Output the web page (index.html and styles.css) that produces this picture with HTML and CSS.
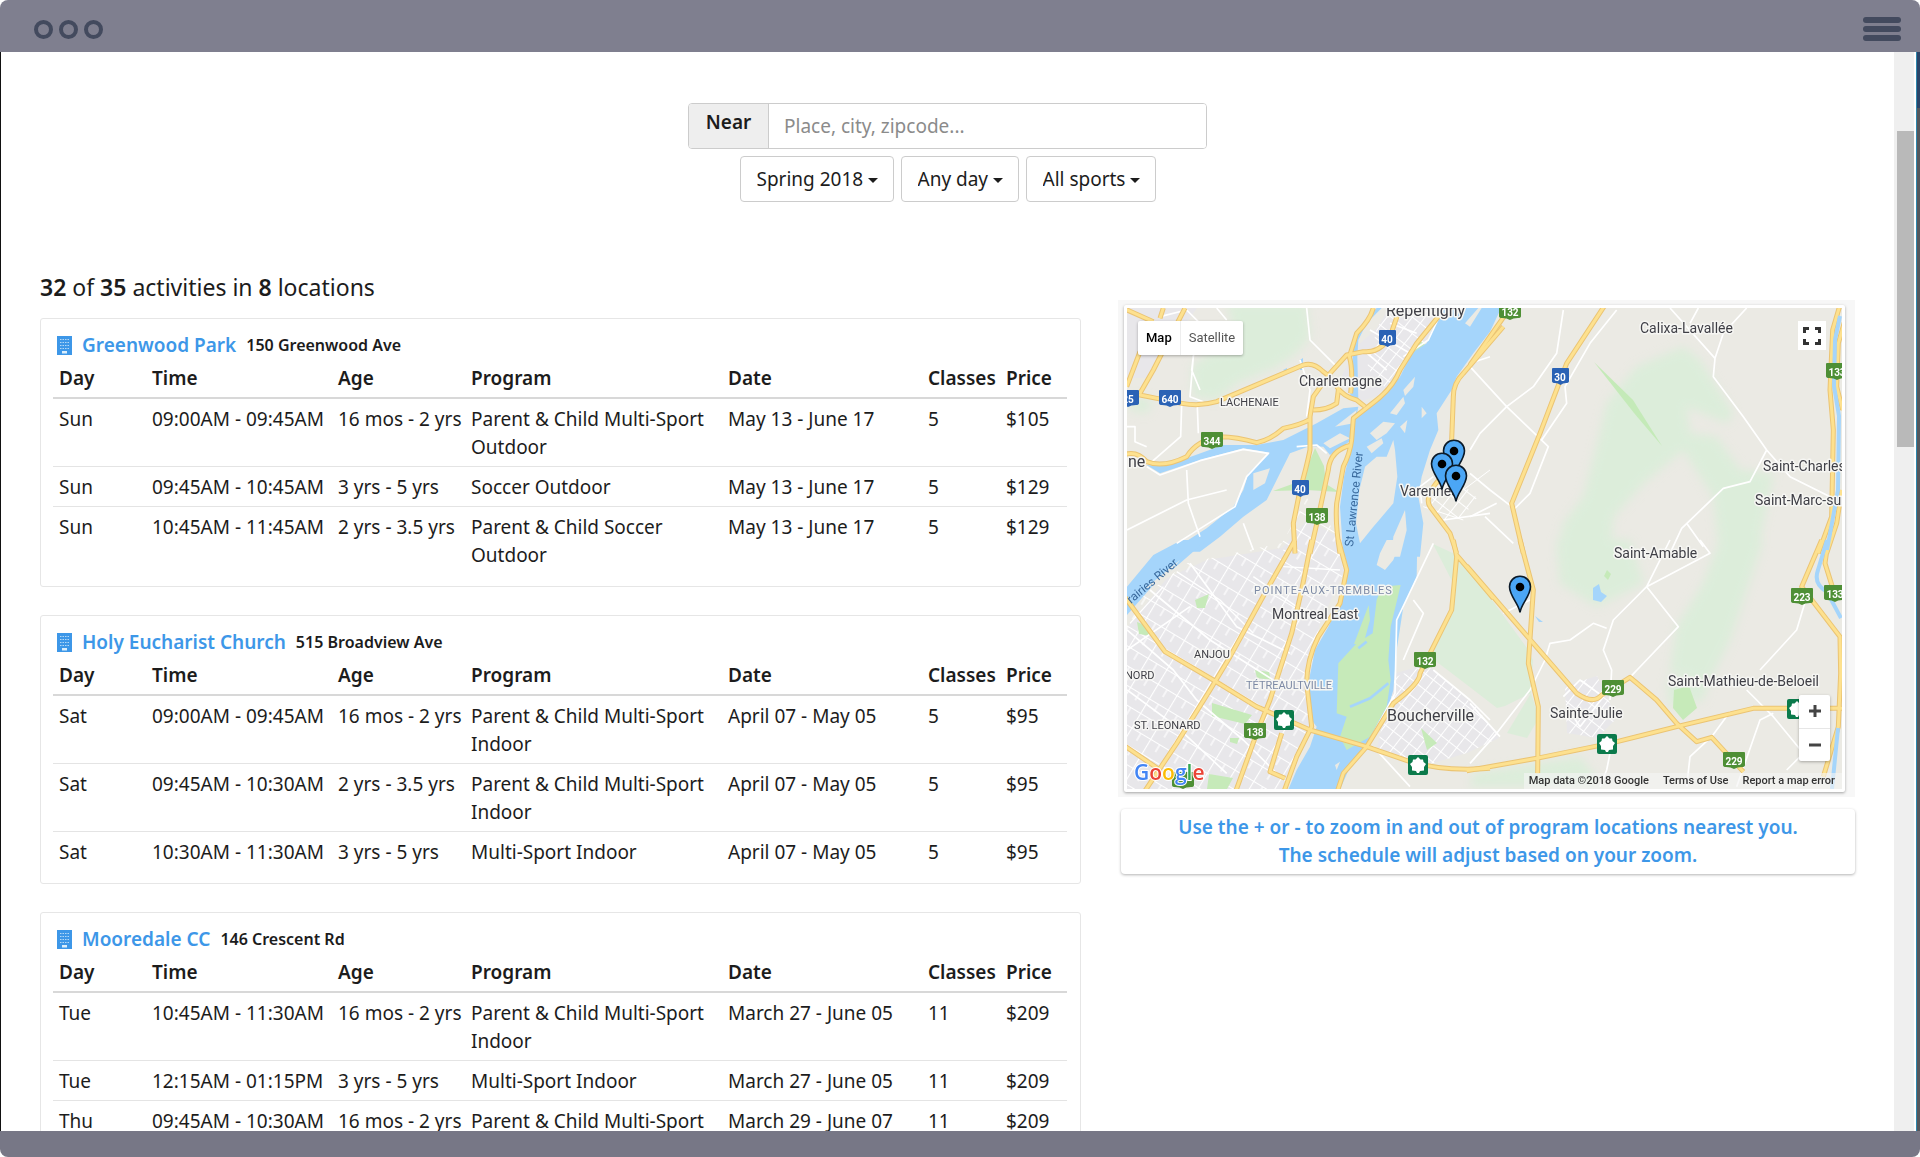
FILE: index.html
```html
<!DOCTYPE html>
<html lang="en">
<head>
<meta charset="utf-8">
<title>Activities by location</title>
<link rel="stylesheet" href="styles.css">
</head>
<body>
<div class="window">
  <header class="titlebar">
    <div class="dots"><span class="dot"></span><span class="dot"></span><span class="dot"></span></div>
    <button class="menu" type="button" aria-label="Menu"><span class="menu-bar"></span><span class="menu-bar"></span><span class="menu-bar"></span></button>
  </header>

  <div class="viewport">
    <div class="page">
      <form class="search">
        <div class="near">
          <label class="near-label" for="place">Near</label>
          <input class="near-input" id="place" type="text" placeholder="Place, city, zipcode...">
        </div>
        <div class="filters">
          <div class="filter"><select class="filter-select" aria-label="Season"><option>Spring 2018</option></select></div>
          <div class="filter"><select class="filter-select" aria-label="Day"><option>Any day</option></select></div>
          <div class="filter"><select class="filter-select" aria-label="Sport"><option>All sports</option></select></div>
        </div>
      </form>

      <main class="columns">
        <section class="results">
          <h1 class="summary"><strong>32</strong> of <strong>35</strong> activities in <strong>8</strong> locations</h1>

          <article class="card">
            <h2 class="place"><svg class="building" viewBox="0 0 15 19" aria-hidden="true"><use href="#building"/></svg><a class="place-name" href="#greenwood">Greenwood Park</a><small class="address">150 Greenwood Ave</small></h2>
            <table class="schedule">
              <colgroup><col class="c-day"><col class="c-time"><col class="c-age"><col class="c-program"><col class="c-date"><col class="c-classes"><col class="c-price"></colgroup>
              <thead><tr><th>Day</th><th>Time</th><th>Age</th><th>Program</th><th>Date</th><th>Classes</th><th>Price</th></tr></thead>
              <tbody>
                <tr><td>Sun</td><td>09:00AM - 09:45AM</td><td>16 mos - 2 yrs</td><td class="wrap">Parent &amp; Child Multi-Sport Outdoor</td><td>May 13 - June 17</td><td>5</td><td>$105</td></tr>
                <tr><td>Sun</td><td>09:45AM - 10:45AM</td><td>3 yrs - 5 yrs</td><td class="wrap">Soccer Outdoor</td><td>May 13 - June 17</td><td>5</td><td>$129</td></tr>
                <tr><td>Sun</td><td>10:45AM - 11:45AM</td><td>2 yrs - 3.5 yrs</td><td class="wrap">Parent &amp; Child Soccer Outdoor</td><td>May 13 - June 17</td><td>5</td><td>$129</td></tr>
              </tbody>
            </table>
          </article>

          <article class="card">
            <h2 class="place"><svg class="building" viewBox="0 0 15 19" aria-hidden="true"><use href="#building"/></svg><a class="place-name" href="#holy-eucharist">Holy Eucharist Church</a><small class="address">515 Broadview Ave</small></h2>
            <table class="schedule">
              <colgroup><col class="c-day"><col class="c-time"><col class="c-age"><col class="c-program"><col class="c-date"><col class="c-classes"><col class="c-price"></colgroup>
              <thead><tr><th>Day</th><th>Time</th><th>Age</th><th>Program</th><th>Date</th><th>Classes</th><th>Price</th></tr></thead>
              <tbody>
                <tr><td>Sat</td><td>09:00AM - 09:45AM</td><td>16 mos - 2 yrs</td><td class="wrap">Parent &amp; Child Multi-Sport Indoor</td><td>April 07 - May 05</td><td>5</td><td>$95</td></tr>
                <tr><td>Sat</td><td>09:45AM - 10:30AM</td><td>2 yrs - 3.5 yrs</td><td class="wrap">Parent &amp; Child Multi-Sport Indoor</td><td>April 07 - May 05</td><td>5</td><td>$95</td></tr>
                <tr><td>Sat</td><td>10:30AM - 11:30AM</td><td>3 yrs - 5 yrs</td><td class="wrap">Multi-Sport Indoor</td><td>April 07 - May 05</td><td>5</td><td>$95</td></tr>
              </tbody>
            </table>
          </article>

          <article class="card">
            <h2 class="place"><svg class="building" viewBox="0 0 15 19" aria-hidden="true"><use href="#building"/></svg><a class="place-name" href="#mooredale">Mooredale CC</a><small class="address">146 Crescent Rd</small></h2>
            <table class="schedule">
              <colgroup><col class="c-day"><col class="c-time"><col class="c-age"><col class="c-program"><col class="c-date"><col class="c-classes"><col class="c-price"></colgroup>
              <thead><tr><th>Day</th><th>Time</th><th>Age</th><th>Program</th><th>Date</th><th>Classes</th><th>Price</th></tr></thead>
              <tbody>
                <tr><td>Tue</td><td>10:45AM - 11:30AM</td><td>16 mos - 2 yrs</td><td class="wrap">Parent &amp; Child Multi-Sport Indoor</td><td>March 27 - June 05</td><td>11</td><td>$209</td></tr>
                <tr><td>Tue</td><td>12:15AM - 01:15PM</td><td>3 yrs - 5 yrs</td><td class="wrap">Multi-Sport Indoor</td><td>March 27 - June 05</td><td>11</td><td>$209</td></tr>
                <tr><td>Thu</td><td>09:45AM - 10:30AM</td><td>16 mos - 2 yrs</td><td class="wrap">Parent &amp; Child Multi-Sport Indoor</td><td>March 29 - June 07</td><td>11</td><td>$209</td></tr>
              </tbody>
            </table>
          </article>
        </section>

        <aside class="side">
          <div class="map-well">
            <div class="map-frame">
              <div class="map">
                <svg class="map-art" viewBox="0 0 715 481" preserveAspectRatio="xMidYMid slice" role="img" aria-label="Map of program locations">
                  <defs>
                    <symbol id="building" viewBox="0 0 15 19">
                      <path fill="#3d97e8" d="M0 0h15v19H0z"/>
                      <path fill="none" stroke="#b5d9f7" stroke-width="1" d="M3 3.500h9M3 6.500h9M3 9.500h9M3 12.500h9" stroke-dasharray="1.500 1"/>
                      <path fill="#dceefb" d="M5 15h5v2.500H5z"/>
                    </symbol>
                    <pattern id="streets" width="22" height="17" patternUnits="userSpaceOnUse" patternTransform="rotate(31)">
                      <path d="M0 .5H22M.5 0V17M11 0V9" stroke="#fff" stroke-width="1.200" fill="none"/>
                    </pattern>
                    <pattern id="lanes" width="10" height="13" patternUnits="userSpaceOnUse" patternTransform="rotate(38)">
                      <path d="M0 .5H10M.5 0V13" stroke="#fff" stroke-width="1" fill="none"/>
                    </pattern>
                    <filter id="soft" x="-20%" y="-20%" width="140%" height="140%"><feGaussianBlur stdDeviation="5"/></filter>
                    <symbol id="pin" viewBox="0 0 24 39" overflow="visible">
                      <path d="M12 37.500C11 29 1.500 21 1.500 11.800 1.500 6 6 1.300 12 1.300S22.500 6 22.500 11.800C22.500 21 13 29 12 37.500Z" fill="#4ba6f5" stroke="#0b1a28" stroke-width="1.600"/>
                      <circle cx="12" cy="12" r="4.300" fill="#000"/>
                    </symbol>
                    <symbol id="shield" viewBox="0 0 22 17" overflow="visible">
                      <path d="M1 0H21Q22 0 22 1V13Q22 15 19 15 14 15 11 17 8 15 3 15 0 15 0 13V1Q0 0 1 0Z"/>
                    </symbol>
                    <symbol id="shield-narrow" viewBox="0 0 17 17" overflow="visible">
                      <path d="M1 0H16Q17 0 17 1V13Q17 15 14 15 11 15 8.500 17 6 15 3 15 0 15 0 13V1Q0 0 1 0Z"/>
                    </symbol>
                    <symbol id="leaf" viewBox="0 0 20 20">
                      <rect width="20" height="20" rx="2" fill="#0b7a4b"/>
                      <path fill="#fff" d="M10 2 12.500 4.500 15 4.500 15.500 7 18 9 16 12 16 15.500 12 16 11 18H9L8 16 4 15.500 4 12 2 9 4.500 7 5 4.500 7.500 4.500Z"/>
                    </symbol>
                  </defs>

                  <rect width="715" height="481" fill="#ebeae4"/>

                  <!-- woodland -->
                  <g fill="#dcedda" filter="url(#soft)">
                    <g transform="translate(-17 -18) scale(.33333)">
                      <path d="M350 40H590L600 140 560 190 500 230 380 280 320 330 250 320 245 230 300 190 390 180Z"/>
                      <path d="M60 320 130 330 110 370 60 360Z"/>
                    </g>
                    <g transform="translate(343 -18) scale(.33333)">
                      <path d="M640 170 690 210 740 290 790 370 770 400 700 370 650 350 660 430 740 440 810 540 910 550 860 800H750L730 620 640 480 520 580 430 680 420 800H260L280 700 340 620 380 470 410 340 500 230 570 200Z"/>
                    </g>
                    <g transform="translate(343 232) scale(.33333)">
                      <path d="M260 0H480L520 130 380 200 270 130Z"/>
                      <path d="M750 0H880L780 300 720 420 600 400 620 260 700 130Z"/>
                      <path d="M590 420 720 410 700 480 600 500ZM0 740 10 700 330 650 400 740Z"/>
                    </g>
                  </g>
                  <g fill="#dcedda">
                    <path d="M306 236 326 275 327 302 302 348 331 370 370 400 378 398 404 385 406 352 400 340 343 262 330 247Z"/>
                    <path d="M404 385 412 410 400 430 380 425Z"/>
                  </g>
                  <path d="M467 54 506 92 535 138 507 105Z" fill="#c4eab8"/>

                  <!-- built-up areas -->
                  <g fill="#e8e7ea">
                    <path d="M0 320 40 270 80 252 155 240 180 212 214 230 218 262 193 315 182 370 184 415 160 481H0Z"/>
                    <path d="M0 0H70L20 70H0ZM250 20 262 0H312L298 36 262 84 226 96 214 70 228 40Z"/>
                    <path d="M266 366 300 356 350 400 372 430 340 445 290 460 250 440Z"/>
                    <path d="M438 378 470 368 490 410 470 430 440 425Z"/>
                  </g>
                  <path fill="url(#streets)" d="M0 300 60 255 155 235 180 190 214 230 218 262 193 315 182 370 184 415 160 481H0Z"/>
                  <g fill="url(#lanes)">
                    <path d="M266 370 300 356 350 400 372 430 340 445 290 460 250 440Z"/>
                    <path d="M438 378 470 368 490 410 470 430 440 425ZM250 20 262 0H312L298 36 262 84 240 60Z"/>
                    <path d="M300 180 330 170 350 190 335 210 310 212Z"/>
                  </g>

                  <!-- parks -->
                  <g fill="#c6eab9">
                    <path d="M188 140 197 158 199 176 212 184 180 182 176 170ZM146 183 182 170 182 182Z"/>
                    <path d="M85 395 125 407 118 416 85 408ZM82 466 106 470 100 481H80ZM68 292 82 286 78 300 70 300ZM128 362 142 364 144 372 130 370ZM10 314 20 318 24 328 12 326ZM103 430 112 430 110 436 103 434Z"/>
                    <path d="M290 32 298 36 288 50 284 48ZM294 420 310 435 300 442ZM547 382 562 378 570 400 556 412 546 400ZM480 262 484 266 481 272 477 268Z"/>
                  </g>

                  <!-- water -->
                  <g fill="#a5d5fb">
                    <g transform="translate(-17 -18) scale(.33333)">
                      <path d="M1000 40H1180L1140 125 1090 190 1040 260 1025 300 980 370 985 420 960 480 935 560 925 620 940 700 930 800H700L690 650 702 560 722 480 735 380 770 350 830 310 870 260 905 190 950 160Z"/>
                      <path d="M745 350 700 355 620 400 520 450 440 465 340 465 230 505 160 528 110 525 150 550 270 510 400 475 480 488 415 550 400 600 370 650 290 715 180 785H270L330 740 400 680 470 630 500 570 540 490 600 468 640 470 660 495 725 450Z"/>
                      <path d="M815 54 770 100 745 150 742 200 745 330H720L728 200 735 140 760 100 800 54Z"/>
                    </g>
                    <g transform="translate(-17 232) scale(.33333)">
                      <path d="M215 0 130 45 51 140V225L130 135 210 70 290 0Z"/>
                      <path d="M695 0 712 80 692 180 655 260 615 330 595 430 605 540 620 560 600 620 560 690 530 760H685L720 680 770 610 830 520 850 450 860 330 880 200 920 110 922 0Z"/>
                    </g>
                    <path d="M466 280 472 276 474 284 480 288 474 294 466 292ZM408 308 416 314 412 314ZM156 62 160 60 160 64ZM173 52 176 50V62H173Z"/>
                  </g>
                  <!-- islands -->
                  <g fill="#ebeae4">
                    <g transform="translate(-17 -18) scale(.33333)">
                      <path d="M850 450 830 500 800 500 765 530 748 600 738 700 750 760 790 710 850 640 862 560 855 480Z"/>
                      <path d="M780 430 820 395 855 400 830 430 800 450ZM640 460 690 430 720 445 660 475ZM675 410 740 360 730 400ZM430 600 430 550 480 535 465 580ZM840 370 880 320 885 340 860 375ZM880 300 915 260 910 290 885 318ZM1065 100 1105 54H1115L1080 110ZM770 470 815 445 820 460 785 490ZM935 350 950 370 935 385ZM870 410 892 390 885 430Z"/>
                      <path d="M850 740 885 660 890 720 870 800H845Z"/>
                    </g>
                    <g transform="translate(-17 232) scale(.33333)">
                      <path d="M872 0 850 60 825 90 800 75 810 40 830 0ZM675 675 690 665 680 690Z"/>
                      <path d="M100 150 210 60 160 120Z"/>
                    </g>
                  </g>
                  <g transform="translate(-17 232) scale(.33333)">
                    <path fill="#c6eab9" d="M800 180 815 140 872 135 842 260 835 360 842 420 830 500 780 590 710 630 690 590 710 530 680 520 685 370 740 310 788 280ZM776 195 780 240 760 312 732 312Z"/>
                    <path fill="none" stroke="#a5d5fb" stroke-width="8" d="M835 430 780 475 720 500M770 305 745 325"/>
                  </g>

                  <!-- local roads -->
                  <g fill="none" stroke="#fff" stroke-width="5" stroke-linejoin="round">
                    <g transform="translate(-17 -18) scale(.33333)">
                      <path d="M51 410H75V455L110 470M215 345 212 440 120 520M262 350 265 430M250 200 240 320 280 335M320 54 350 90M150 80 230 60 270 100 250 200 245 240 270 300M590 54 600 150 680 230M590 380 600 300 570 210M51 720 230 630 350 600M230 540 235 640 270 740M400 700 430 780M760 180 830 240M780 120 900 190M840 100 920 130M110 530 150 555 270 512 400 478 475 490 410 560 375 650 200 760M560 470 620 465 650 490M1000 54 955 150 880 200M1140 200 1080 220M970 560 930 590 935 640M1000 690 1140 670"/>
                      <path stroke-width="3" d="M1140 540 1060 600M940 650 1060 690"/>
                    </g>
                    <g transform="translate(343 -18) scale(.33333)">
                      <path d="M0 230 110 350 235 470 180 610 130 660M280 60 260 190 190 290 110 350 30 430 0 480M440 60 360 160 285 290 290 340 215 450M600 54 735 205 730 260 820 380 890 480 960 560 1100 630M830 54 760 130 735 205M890 480 840 575 760 595 635 715 600 790M0 550 60 600 125 650M45 680 130 760M0 680 80 640M685 54 660 100M650 700 700 770"/>
                    </g>
                    <g transform="translate(343 232) scale(.33333)">
                      <path d="M600 0 530 140 430 240 400 330 425 390 420 480M690 0 720 40 530 140M530 140 625 260 480 412M410 265 370 250 300 300 240 310 225 360 180 450 80 580 0 670M1010 170 980 270 870 390M830 450 910 530 1000 640 950 690M910 520 870 540 800 740M780 515 725 590 660 650 650 740M100 220 180 180M0 490 90 590M420 640 410 690 390 740M280 470 330 420 400 470 330 560 290 500"/>
                    </g>
                    <g transform="translate(-17 232) scale(.33333)">
                      <path d="M970 10 860 240 855 460 790 580M910 180 940 220 880 360M970 390 1080 480 1140 540M51 270 190 390 260 480 400 600 500 700M51 450 200 560 350 700M240 70 380 260 540 340M51 330 240 200M120 150 300 300 490 420M790 620 900 740"/>
                      <path stroke-width="4" d="M200 95 330 180 430 280M160 140 60 250M540 40 520 30M520 80 690 90M430 110 560 200 690 240"/>
                    </g>
                  </g>

                  <!-- highways: a darker casing under a lighter fill -->
                  <defs>
                    <g id="highways" fill="none" stroke-linejoin="round">
                      <g transform="translate(-17 -18) scale(.33333)">
                        <path d="M40 310 90 315 140 325 215 340Q270 350 320 335L580 225Q610 215 640 245L660 260M40 495Q80 480 110 515 160 535 230 500 260 450 330 440 380 440 440 458 480 450 520 415 570 405 600 388M870 54 840 140Q810 190 760 185L710 195 660 250 610 320 600 380V480Q590 530 570 600L550 700 555 790M790 54Q780 90 740 130L718 200Q730 240 722 310M680 290Q700 320 740 330L765 350M985 80 920 160 870 240Q850 290 800 330L730 385 725 450Q720 490 700 530L680 640Q675 700 690 790M725 465Q660 480 655 540L625 680 600 790M685 300 680 340Q650 360 610 360M40 55 130 95M160 54 150 85M90 185 50 290M225 54 130 240 90 310M1180 110 1060 250Q1030 280 1030 320L1025 450M995 560Q940 620 960 650L1020 730 1040 790"/>
                      </g>
                      <g transform="translate(-17 232) scale(.33333)">
                        <path d="M555 0 470 150 360 350 300 450 200 610 100 760M685 0 710 90 690 190 625 290Q590 360 590 430L605 560 560 650 520 760M605 0 575 150 545 280 480 480 440 580 375 760M1030 0 1040 50 1025 210 960 340 930 400Q930 430 850 490L770 620 700 700 680 760M1040 45 1150 175M40 165 165 335 310 420 440 500 600 570 770 620 900 665Q1000 695 1140 685M40 615 150 690M515 580 480 695 525 715"/>
                      </g>
                      <g transform="translate(343 -18) scale(.33333)">
                        <path d="M405 45 290 220 210 430 125 640 160 790M120 54 0 225M1110 45 1088 120 1080 300 1090 420 1085 680 1045 790M1125 90 1105 160 1100 290 1118 360M1115 600 1100 700 1070 790"/>
                      </g>
                      <g transform="translate(343 232) scale(.33333)">
                        <path d="M150 0 190 150 175 370 205 500 203 700M-10 78 190 310 320 460Q370 495 395 465L480 412 560 480 620 550 680 605 725 592 820 695M-10 692 200 655 420 610 620 560 850 505H1120M1055 0 995 140 1110 290 1112 400 1105 560 1060 710M1075 0 1065 70 1090 150"/>
                      </g>
                    </g>
                  </defs>
                  <use href="#highways" stroke="#ebc473" stroke-width="15"/>
                  <use href="#highways" stroke="#fde18f" stroke-width="9"/>
                  <g fill="none" stroke="#a5d5fb" stroke-width="4">
                    <path d="M713 8 708 32 707 78 712 108 711 182 700 242M700 232 691 262Q686 276 700 284L714 310M705 481 711 420"/>
                  </g>

                  <!-- town names -->
                  <g class="names">
                    <text x="259" y="8" class="t-large">Repentigny</text>
                    <text x="172" y="78" class="t-mid">Charlemagne</text>
                    <text x="93" y="98" class="t-caps">LACHENAIE</text>
                    <text x="1" y="159" class="t-large">ne</text>
                    <text x="273" y="188" class="t-mid">Varennes</text>
                    <text x="513" y="25" class="t-mid">Calixa-Lavallée</text>
                    <text x="636" y="163" class="t-mid">Saint-Charles</text>
                    <text x="628" y="197" class="t-mid">Saint-Marc-sur</text>
                    <text x="487" y="250" class="t-mid">Saint-Amable</text>
                    <text x="541" y="378" class="t-mid">Saint-Mathieu-de-Beloeil</text>
                    <text x="423" y="410" class="t-mid">Sainte-Julie</text>
                    <text x="145" y="311" class="t-mid">Montreal East</text>
                    <text x="260" y="413" class="t-large">Boucherville</text>
                    <text x="67" y="350" class="t-caps">ANJOU</text>
                    <text x="-2" y="371" class="t-caps">NORD</text>
                    <text x="7" y="421" class="t-caps">ST. LEONARD</text>
                    <text x="127" y="286" class="t-district t-spaced">POINTE-AUX-TREMBLES</text>
                    <text x="119" y="381" class="t-district">TÉTREAULTVILLE</text>
                    <text class="t-river" transform="translate(226 239) rotate(-84)">St Lawrence River</text>
                    <text class="t-river" transform="translate(4 296) rotate(-40)">rairies River</text>
                  </g>

                  <!-- route shields -->
                  <g class="blue">
                    <use href="#shield" x="-10" y="82" width="22" height="17"/><use href="#shield" x="32" y="82" width="22" height="17"/>
                    <use href="#shield-narrow" x="252" y="22" width="17" height="17"/><use href="#shield-narrow" x="165" y="172" width="17" height="17"/>
                    <use href="#shield-narrow" x="425" y="60" width="17" height="17"/>
                  </g>
                  <g class="green">
                    <use href="#shield" x="74" y="124" width="22" height="17"/><use href="#shield" x="179" y="200" width="22" height="17"/>
                    <use href="#shield" x="372" y="-5" width="22" height="17"/><use href="#shield" x="699" y="55" width="22" height="17"/>
                    <use href="#shield" x="117" y="415" width="22" height="17"/><use href="#shield" x="287" y="344" width="22" height="17"/>
                    <use href="#shield" x="664" y="280" width="22" height="17"/><use href="#shield" x="697" y="277" width="22" height="17"/>
                    <use href="#shield" x="475" y="372" width="22" height="17"/><use href="#shield" x="596" y="444" width="22" height="17"/>
                    <use href="#shield" x="45" y="464" width="22" height="17"/>
                  </g>
                  <g class="routes">
                    <text x="1" y="95">25</text><text x="43" y="95">640</text><text x="260" y="35">40</text><text x="173" y="185">40</text><text x="433" y="73">30</text>
                    <text x="85" y="137">344</text><text x="190" y="213">138</text><text x="383" y="8">132</text><text x="710" y="68">133</text>
                    <text x="128" y="428">138</text><text x="298" y="357">132</text><text x="675" y="293">223</text><text x="708" y="290">133</text>
                    <text x="486" y="385">229</text><text x="607" y="457">229</text>
                  </g>
                  <use href="#leaf" x="147" y="402" width="20" height="20"/>
                  <use href="#leaf" x="281" y="447" width="20" height="20"/>
                  <use href="#leaf" x="470" y="426" width="20" height="20"/>
                  <use href="#leaf" x="660" y="391" width="20" height="20"/>

                  <!-- program locations -->
                  <use href="#pin" x="315" y="131" width="24" height="39"/>
                  <use href="#pin" x="303" y="144" width="24" height="39"/>
                  <use href="#pin" x="317" y="156" width="24" height="39"/>
                  <use href="#pin" x="381" y="267" width="24" height="39"/>

                  <text class="google" x="7" y="472"><tspan fill="#4285f4">G</tspan><tspan fill="#ea4335">o</tspan><tspan fill="#fbbc05">o</tspan><tspan fill="#4285f4">g</tspan><tspan fill="#34a853">l</tspan><tspan fill="#ea4335">e</tspan></text>
                </svg>
                <div class="map-types"><button class="map-type is-on" type="button">Map</button><button class="map-type" type="button">Satellite</button></div>
                <button class="fullscreen" type="button" aria-label="Full screen"><svg viewBox="0 0 18 18" width="18" height="18"><path fill="none" stroke="#333" stroke-width="3" d="M1.500 6V1.500H6M12 1.500H16.500V6M16.500 12V16.500H12M6 16.500H1.500V12"/></svg></button>
                <div class="zoom">
                  <button class="zoom-btn" type="button" aria-label="Zoom in"><svg viewBox="0 0 12 12" width="12" height="12"><path stroke="#444" stroke-width="3" d="M0 6H12M6 0V12"/></svg></button>
                  <button class="zoom-btn" type="button" aria-label="Zoom out"><svg viewBox="0 0 12 12" width="12" height="12"><path stroke="#444" stroke-width="3" d="M0 6H12"/></svg></button>
                </div>
                <div class="credits"><span>Map data ©2018 Google</span><a href="#terms">Terms of Use</a><a href="#report">Report a map error</a></div>
              </div>
            </div>
          </div>
          <p class="hint">Use the + or - to zoom in and out of program locations nearest you.<br>The schedule will adjust based on your zoom.</p>
        </aside>
      </main>
    </div>
    <div class="scroll-track"><div class="scroll-thumb"></div></div>
    <div class="edge"></div>
  </div>
  <footer class="bottombar"></footer>
</div>
</body>
</html>
```
FILE: styles.css
```css
* { box-sizing: border-box; }

body {
  margin: 0;
  font: 19px/28px "Noto Sans", "Open Sans", sans-serif;
  color: #1c1c1c;
  background: #fff;
}

button, input, select { font: inherit; color: inherit; }
a { color: inherit; text-decoration: none; }

.window { display: flex; flex-direction: column; height: 100vh; overflow: hidden; }

/* window chrome */
.titlebar {
  flex: none;
  display: flex;
  align-items: center;
  justify-content: space-between;
  height: 52px;
  padding: 6px 19px 0 34px;
  background: #7f7f8f;
  border-radius: 8px 8px 0 0;
}
.dots { display: flex; gap: 6px; }
.dot { width: 19px; height: 19px; border: 4px solid #434a5e; border-radius: 50%; }
.menu { display: flex; flex-direction: column; gap: 3px; padding: 0; border: 0; background: none; }
.menu-bar { width: 38px; height: 6px; border-radius: 3px; background: #434a5e; }
.bottombar { flex: none; height: 26px; background: #777786; border-radius: 0 0 8px 8px; }

.viewport { flex: 1; min-height: 0; display: flex; border-left: 1px solid #111; overflow: hidden; }
.page { flex: 1; min-width: 0; padding: 51px 39px 0; }
.scroll-track { width: 20px; padding: 79px 0 0 3px; background: #efefef; }
.scroll-thumb { height: 316px; background: #b9b9b9; }
.edge { width: 6px; background: linear-gradient(to right, #fff 2px, #2d87ad 2px 3px, transparent 3px), linear-gradient(#2b4468 56px, #55575c 56px); }

/* search */
.search { display: flex; flex-direction: column; align-items: center; gap: 7px; }
.near { display: flex; width: 519px; height: 46px; border: 1px solid #ccc; border-radius: 4px; overflow: hidden; }
.near-label { width: 80px; padding-top: 4px; border-right: 1px solid #ccc; background: #eee; text-align: center; font-weight: 600; }
.near-input { flex: 1; min-width: 0; padding: 0 15px; border: 0; background: #fff; }
.near-input::placeholder { color: #8b8b8b; opacity: 1; }
.filters { display: flex; gap: 7px; }
.filter { position: relative; }
.filter::after {
  content: "";
  position: absolute;
  right: 16px;
  top: 22px;
  border: 5px solid transparent;
  border-top-color: #1c1c1c;
  border-bottom: 0;
  pointer-events: none;
}
.filter-select { appearance: none; height: 46px; padding: 0 29px 0 16px; border: 1px solid #ccc; border-radius: 4px; background: #fff; }

/* results */
.columns { display: grid; grid-template-columns: 1041fr 737fr; gap: 37px; margin-top: 71px; align-items: start; }
.summary { margin: 0 0 17px; font-size: 23px; line-height: 28px; font-weight: 400; }
.summary strong { font-weight: 600; }
.card { margin-bottom: 28px; padding: 12px 13px 11px 12px; border: 1px solid #e6e6e6; border-radius: 3px; }
.place { display: flex; align-items: center; margin: 0; padding-left: 4px; font-size: 19px; line-height: 28px; }
.building { width: 15px; height: 19px; margin-right: 10px; }
.place-name { color: #3d97e8; font-weight: 600; }
.address { margin-left: 10px; font-size: 16px; font-weight: 600; }
.schedule { width: 100%; table-layout: fixed; border-collapse: separate; border-spacing: 0; text-align: left; }
.schedule th { padding: 5px 6px; border-bottom: 2px solid #d8d8d8; font-weight: 600; }
.schedule td { padding: 6px 6px 5px; border-bottom: 1px solid #e4e4e4; vertical-align: top; white-space: nowrap; }
.schedule tr:last-child td { border-bottom-color: transparent; }
.schedule .wrap { white-space: normal; }
.c-day { width: 93px; }
.c-time { width: 186px; }
.c-age { width: 133px; }
.c-program { width: 257px; }
.c-date { width: 200px; }
.c-classes { width: 78px; }
.c-price { width: 67px; }

/* map */
.side { padding-top: 27px; }
.map-well { padding: 5px 10px 5px 6px; background: #f7f7f7; }
.map-frame { padding: 3px; background: #fff; border-radius: 2px; box-shadow: 0 1px 3px rgba(0, 0, 0, .35); }
.map { position: relative; aspect-ratio: 715 / 481; overflow: hidden; font-family: Roboto, sans-serif; }
.map-art { display: block; width: 100%; height: 100%; }
.names text { fill: #3f3f46; stroke: #f6f6f3; stroke-width: 3px; stroke-linejoin: round; paint-order: stroke; }
.names .t-large { font-size: 16px; }
.names .t-mid { font-size: 14px; }
.names .t-caps { font-size: 11px; }
.names .t-district { font-size: 11px; fill: #7d8aa5; }
.names .t-spaced { letter-spacing: 1px; }
.names .t-river { font-size: 12px; fill: #39699c; stroke: none; }
.blue { fill: #2a62b5; }
.green { fill: #4e8f35; }
.routes text { font-size: 10px; font-weight: 700; fill: #fff; text-anchor: middle; }
.google { font: 600 21px "Open Sans", sans-serif; stroke: #fff; stroke-width: 2px; paint-order: stroke; }

.map-types { position: absolute; left: 11px; top: 13px; display: flex; height: 34px; border-radius: 2px; background: #fff; box-shadow: 0 1px 3px rgba(0, 0, 0, .3); }
.map-type { padding: 0 8px; border: 0; background: none; font-size: 13px; color: #565656; }
.map-type.is-on { border-right: 1px solid #eee; font-weight: 500; color: #000; }
.fullscreen { position: absolute; right: 16px; top: 13px; display: flex; align-items: center; justify-content: center; width: 28px; height: 29px; padding: 0; border: 0; background: #fff; }
.zoom { position: absolute; right: 12px; bottom: 28px; display: flex; flex-direction: column; width: 31px; height: 66px; border-radius: 2px; background: #fff; box-shadow: 0 1px 3px rgba(0, 0, 0, .3); }
.zoom-btn { flex: 1; display: flex; align-items: center; justify-content: center; padding: 0; border: 0; background: none; }
.zoom-btn + .zoom-btn { border-top: 1px solid #e6e6e6; }
.credits { position: absolute; right: 0; bottom: 0; display: flex; gap: 14px; padding: 0 7px 0 5px; background: rgba(245, 245, 245, .6); font-size: 11px; font-weight: 500; line-height: 16px; color: #333; }

.hint { margin: 12px 0 0 3px; padding: 4px 0 5px; border-radius: 4px; box-shadow: 0 1px 3px rgba(0, 0, 0, .3); color: #3d97e8; font-weight: 600; text-align: center; }
```
